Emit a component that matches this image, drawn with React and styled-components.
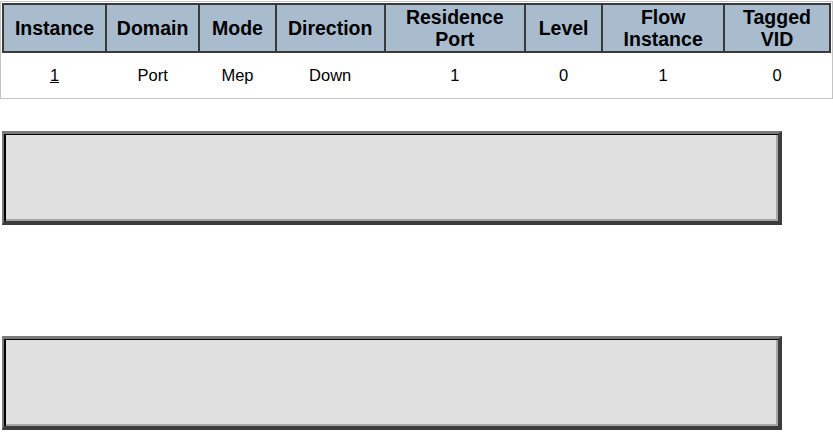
import React from "react";
import styled, { createGlobalStyle } from "styled-components";

const GlobalStyle = createGlobalStyle`
  html, body {
    margin: 0;
    padding: 0;
    background: #fff;
  }
  body {
    font-family: "Liberation Sans", Arial, sans-serif;
    color: #000;
  }
`;

const Page = styled.div`
  width: 833px;
  padding-top: 1px;
`;

const TableFrame = styled.div`
  box-sizing: border-box;
  width: 833px;
  border: 1px solid #c4c4c4;
  padding: 1px;
`;

const Table = styled.table`
  width: 100%;
  border-collapse: collapse;
  table-layout: fixed;
`;

const HeadCell = styled.th`
  width: ${(props) => props.w};
  height: 46px;
  padding: 0;
  background: #a9bccd;
  border: 2px solid #3a3a3a;
  font-size: 19.5px;
  font-weight: bold;
  line-height: 22px;
  text-align: center;
  vertical-align: middle;
`;

const Cell = styled.td`
  height: 44px;
  padding: 0;
  font-size: 16.5px;
  text-align: center;
  vertical-align: middle;
`;

const Link = styled.a`
  color: #000;
  text-decoration: underline;
`;

const Panel = styled.div`
  box-sizing: border-box;
  width: 780px;
  height: 94px;
  margin-left: 2px;
  margin-top: ${(props) => props.top}px;
  background: #e0e0e0;
  border-style: solid;
  border-width: 3px 4px 4px 2px;
  border-color: #7b7b7b #3c3c3c #3c3c3c #7b7b7b;
  box-shadow: inset 2px 1px 0 #000, inset -2px -2px 0 #a6a6a6;
`;

const columns = [
  { label: "Instance", w: 103 },
  { label: "Domain", w: 93 },
  { label: "Mode", w: 76 },
  { label: "Direction", w: 109 },
  { label: ["Residence", "Port"], w: 141 },
  { label: "Level", w: 77 },
  { label: ["Flow", "Instance"], w: 122 },
  { label: ["Tagged", "VID"], w: 106 },
];

const total = columns.reduce((s, c) => s + c.w, 0);

const row = ["1", "Port", "Mep", "Down", "1", "0", "1", "0"];

export default function App() {
  return (
    <Page>
      <GlobalStyle />
      <TableFrame>
        <Table>
          <thead>
            <tr>
              {columns.map((c, i) => (
                <HeadCell key={i} w={`${((c.w / total) * 100).toFixed(3)}%`}>
                  {Array.isArray(c.label) ? (
                    <>
                      {c.label[0]}
                      <br />
                      {c.label[1]}
                    </>
                  ) : (
                    c.label
                  )}
                </HeadCell>
              ))}
            </tr>
          </thead>
          <tbody>
            <tr>
              {row.map((v, i) => (
                <Cell key={i}>{i === 0 ? <Link href="#">{v}</Link> : v}</Cell>
              ))}
            </tr>
          </tbody>
        </Table>
      </TableFrame>
      <Panel top={32} />
      <Panel top={111} />
    </Page>
  );
}
